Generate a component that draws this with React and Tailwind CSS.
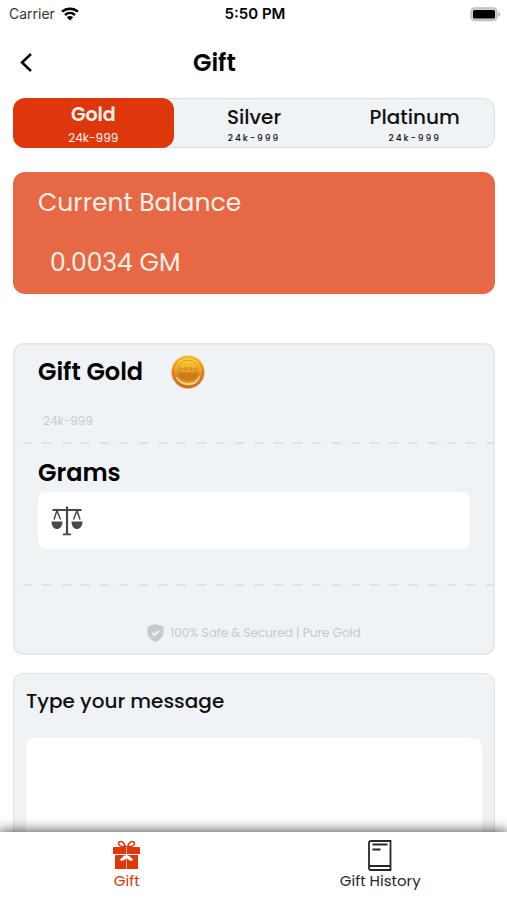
import React, { useState } from 'react';

const metals = ['Gold', 'Silver', 'Platinum'];

function WifiIcon() {
  return (
    <svg className="h-[14px] w-[18px]" viewBox="0 0 18 14" fill="none" stroke="#000" strokeWidth="2.5" aria-hidden="true">
      <path d="M1 4.700C5.500.600 12.500.600 17 4.700" />
      <path d="M4 8c3-2.700 7-2.700 10 0" />
      <path d="M9 13.500 5.800 10.300c1.800-1.600 4.600-1.600 6.400 0z" fill="#000" stroke="none" />
    </svg>
  );
}

function BatteryIcon() {
  return (
    <svg className="h-[15px] w-[31px]" viewBox="0 0 31 15" aria-hidden="true">
      <rect x="1" y="1" width="26" height="12.500" rx="4" fill="#d2d2d2" stroke="#bdbdbd" strokeWidth="1.5" />
      <rect x="3" y="3" width="22" height="8.500" rx="1.5" fill="#000" />
      <path d="M28.500 5c2.500.6 2.500 4 0 4.600z" fill="#b5b5b5" />
    </svg>
  );
}

function CoinIcon() {
  return (
    <svg className="h-[34px] w-[34px]" viewBox="0 0 34 34" aria-hidden="true">
      <defs>
        <linearGradient id="rim" x1="0" y1="0" x2="0" y2="1">
          <stop offset="0" stopColor="#f6bd2e" />
          <stop offset="0.5" stopColor="#df8420" />
          <stop offset="1" stopColor="#cf7118" />
        </linearGradient>
        <linearGradient id="face" x1="0" y1="0" x2="0" y2="1">
          <stop offset="0" stopColor="#fbd437" />
          <stop offset="0.5" stopColor="#eda126" />
          <stop offset="0.7" stopColor="#d67d18" />
          <stop offset="1" stopColor="#f4b53c" />
        </linearGradient>
      </defs>
      <circle cx="17" cy="17" r="16.5" fill="url(#rim)" />
      <circle cx="17" cy="16.500" r="13.500" fill="url(#face)" />
      <path d="M5.500 22c4 8.500 19 11 23-.5" fill="none" stroke="#fbe3a0" strokeWidth="1.500" />
      <circle cx="17" cy="16" r="10.800" fill="none" stroke="#d98c1e" strokeWidth="0.800" />
      <path d="M7 17h20c-1 12-19 12-20 0z" fill="#c96f15" opacity="0.6" />
      <rect x="8" y="12" width="18" height="6" rx="3" fill="#d58a1c" />
      <text x="17" y="17" textAnchor="middle" fontSize="5.500" fontWeight="600" fill="#f0bd45" className="font-['Inter',sans-serif]">GOLD</text>
    </svg>
  );
}

function ScalesIcon() {
  return (
    <svg className="h-[30px] w-8 shrink-0" viewBox="0 0 32 30" fill="none" stroke="#45494d" aria-hidden="true">
      <path d="M16 .5V28" strokeWidth="2.200" />
      <path d="M1.500 4h29M12 28.300h8" strokeWidth="1.800" />
      <path d="M3 13.500 6 4.500l3.500 9M22.500 13.500l3.500-9 3 9" strokeWidth="1.500" />
      <path d="M.5 15.500h11c0 10-11 10-11 0zM20.500 15.500h11c0 10-11 10-11 0z" fill="#45494d" stroke="none" />
    </svg>
  );
}

function ShieldIcon() {
  return (
    <svg className="h-[18px] w-[17px]" viewBox="0 0 17 18" aria-hidden="true">
      <path d="M8.500 0 16.500 2.600v5.600c0 4.500-3.500 8-8 9.800-4.500-1.800-8-5.300-8-9.800V2.600z" fill="#c6cacd" />
      <path d="m5 8.700 2.500 2.500L12 6.700" fill="none" stroke="#eff3f5" strokeWidth="2" />
    </svg>
  );
}

function GiftIcon() {
  return (
    <svg className="h-[30px] w-[27px]" viewBox="0 0 27 30" fill="#de370b" aria-hidden="true">
      <path d="M12.500 6.500C4 7 4.500 1.500 7.500 1.500S11.500 4 12.500 6.500zM14.500 6.500c8.500.5 8-5 5-5S15.500 4 14.500 6.500z" fill="none" stroke="#de370b" strokeWidth="1.500" />
      <path d="M0 8a1 1 0 0 1 1-1h12.200v7H0zM13.800 7H26a1 1 0 0 1 1 1v6H13.800z" />
      <path d="M2 15h11.200v14H2zM13.800 15H25v14H13.800z" />
      <path d="M6.500 19.500c2.500-.5 3.500-4.500 7-4.500s4.500 4 7 4.500l-2 1.500c-2-.3-3.500-1.500-5-3-1.500 1.500-3 2.700-5 3z" fill="#fff" />
    </svg>
  );
}

function HistoryIcon() {
  return (
    <svg className="h-[31px] w-6" viewBox="0 0 24 31" fill="none" stroke="#25262f" strokeWidth="1.800" aria-hidden="true">
      <path d="M22.500 1H3Q1 1 1 3v25q0 2 2 2h19.500zM1.500 26h21" />
      <path d="M4.500 4.500h15M4.500 9.500h8" strokeWidth="2" />
    </svg>
  );
}

function Dashes() {
  return (
    <div className="ml-[10px] flex h-[2px] justify-between" aria-hidden="true">
      {Array.from({ length: 25 }, (_, i) => (
        <span key={i} className="w-[9px] bg-[#dfe2e4]" />
      ))}
    </div>
  );
}

export default function App() {
  const [metal, setMetal] = useState('Gold');

  return (
    <div className="flex h-screen flex-col overflow-hidden bg-white font-['Poppins','Inter',sans-serif] text-black">
      <div className="grid h-7 shrink-0 grid-cols-3 items-center pl-[9px] pr-[6px] font-['Inter',sans-serif] text-sm">
        <div className="flex items-center gap-[6px] text-[#333]">
          Carrier
          <WifiIcon />
        </div>
        <div className="text-center text-[15px] font-semibold">5:50 PM</div>
        <div className="flex justify-end">
          <BatteryIcon />
        </div>
      </div>

      <header className="grid h-[70px] shrink-0 grid-cols-3 items-center">
        <button type="button" aria-label="Back" className="ml-[14px] flex h-6 w-6 items-center justify-center">
          <svg className="h-5 w-3" viewBox="0 0 12 20" fill="none" stroke="#000" strokeWidth="2.500" aria-hidden="true">
            <path d="M11 1 2 9.500l9 8.500" />
          </svg>
        </button>
        <h1 className="pl-6 text-2xl font-semibold">Gift</h1>
      </header>

      <main className="min-h-0 flex-1 overflow-hidden pr-3 pl-[13px]">
        <div className="grid h-[50px] grid-cols-3 rounded-xl bg-[#eff3f5] outline outline-1 -outline-offset-1 outline-[#dcdfe1]">
          {metals.map((name) => (
            <button
              key={name}
              type="button"
              aria-pressed={metal === name}
              onClick={() => setMetal(name)}
              className={
                metal === name
                  ? 'z-10 flex flex-col items-center rounded-xl bg-[#de370b] pt-[5px] text-[#fff4ef]'
                  : 'flex flex-col items-center pt-[7px] text-[#111]'
              }
            >
              <span className={metal === name ? 'text-[19px] leading-6 font-semibold' : 'text-xl leading-6 font-medium'}>{name}</span>
              <span className={metal === name ? 'mt-[3px] text-xs leading-4' : 'mt-px text-[9px] leading-4 font-medium tracking-[2px]'}>24k-999</span>
            </button>
          ))}
        </div>

        <section className="mt-6 h-[122px] rounded-xl bg-[#e66845] px-[25px] pt-[15px] text-[25px] text-[#fff1ea]">
          <h2 className="leading-8">Current Balance</h2>
          <p className="mt-7 pl-3 leading-8">0.0034 GM</p>
        </section>

        <section className="mt-[49px] rounded-[10px] bg-[#eff3f5] pb-3 outline outline-2 -outline-offset-2 outline-[#e5e8e9]">
          <div className="flex items-center gap-7 pt-3 pl-[25px]">
            <h2 className="text-2xl font-semibold">Gift Gold</h2>
            <CoinIcon />
          </div>
          <p className="mt-6 mb-[13px] pl-[30px] text-xs leading-4 text-[#c9cdd0]">24k-999</p>
          <Dashes />
          <div className="px-[25px] pt-[13px] pb-[35px]">
            <label htmlFor="grams" className="block text-2xl font-semibold">Grams</label>
            <div className="mt-[3px] flex h-[57px] items-center rounded-lg bg-white pl-[13px]">
              <ScalesIcon />
              <input id="grams" type="text" inputMode="decimal" className="ml-3 h-full min-w-0 flex-1 bg-transparent text-lg outline-none" />
            </div>
          </div>
          <Dashes />
          <div className="mt-[37px] flex items-center justify-center gap-[6px] text-xs leading-5 text-[#c6cacd]">
            <ShieldIcon />
            100% Safe &amp; Secured | Pure Gold
          </div>
        </section>

        <section className="mt-[18px] rounded-[10px] bg-[#eff3f5] px-[13px] pt-[14px] pb-5 outline outline-1 -outline-offset-1 outline-[#e0e3e5]">
          <label htmlFor="message" className="block text-xl font-medium text-[#111]">Type your message</label>
          <textarea id="message" className="mt-[23px] block h-40 w-full resize-none rounded-lg bg-white p-3 outline-none" />
        </section>
      </main>

      <nav className="z-10 grid h-[68px] shrink-0 grid-cols-2 bg-white text-[15px] leading-5 shadow-[0_0_12px_1px_rgba(0,0,0,0.7)]">
        <a href="#gift" aria-current="page" className="flex flex-col items-center gap-[1px] pt-2 text-[#de370b]">
          <GiftIcon />
          Gift
        </a>
        <a href="#history" className="flex flex-col items-center pt-2 text-[#25262f]">
          <HistoryIcon />
          Gift History
        </a>
      </nav>
    </div>
  );
}
